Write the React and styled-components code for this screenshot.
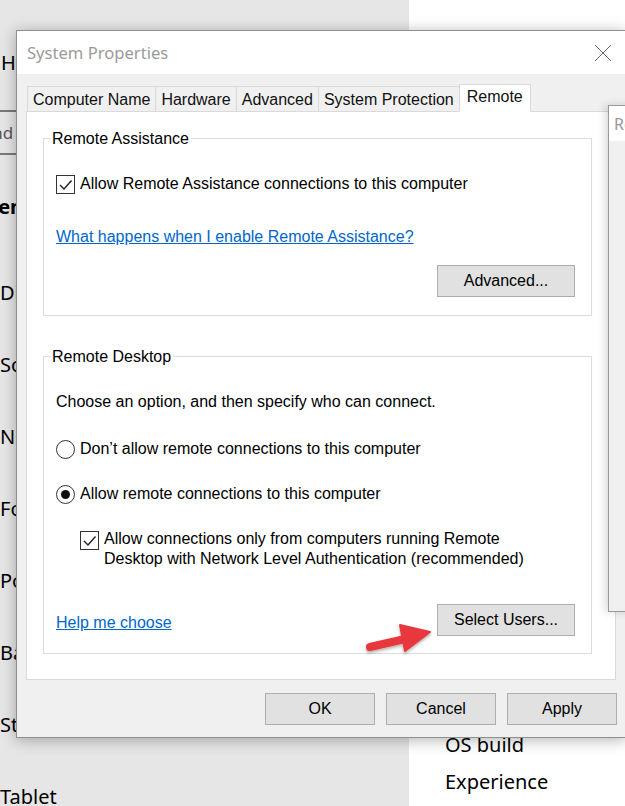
import styled, { createGlobalStyle } from "styled-components";

const GlobalStyle = createGlobalStyle`
  html, body {
    margin: 0;
    padding: 0;
  }
  body {
    width: 625px;
    height: 806px;
    overflow: hidden;
    background: #fff;
  }
`;

const navItems = [
  "Display",
  "Sound",
  "Notifications & actions",
  "Focus assist",
  "Power & sleep",
  "Battery",
  "Storage",
  "Tablet",
];

export default function App() {
  return (
    <>
      <GlobalStyle />
      <Screen>
        <Nav>
          <NavHome>Home</NavHome>
          <SearchBox>Find a setting</SearchBox>
          <NavHeading>System</NavHeading>
          <NavList>
            {navItems.map((item) => (
              <NavItem key={item}>{item}</NavItem>
            ))}
          </NavList>
        </Nav>
        <Content>
          <ContentLine>OS build</ContentLine>
          <ContentLine>Experience</ContentLine>
        </Content>

        <Dialog>
          <TitleBar>
            <Title>System Properties</Title>
            <CloseIcon width="18" height="18" viewBox="0 0 18 18">
              <line x1="1" y1="1" x2="17" y2="17" />
              <line x1="17" y1="1" x2="1" y2="17" />
            </CloseIcon>
          </TitleBar>
          <Body>
            <TabStrip>
              <Tab>Computer Name</Tab>
              <Tab>Hardware</Tab>
              <Tab>Advanced</Tab>
              <Tab>System Protection</Tab>
              <Tab $active>Remote</Tab>
            </TabStrip>
            <Panel>
              <Group $height={178}>
                <Legend>Remote Assistance</Legend>
                <Row>
                  <CheckBox checked />
                  <span>Allow Remote Assistance connections to this computer</span>
                </Row>
                <Link $top={33}>What happens when I enable Remote Assistance?</Link>
                <GroupButton $top={18}>Advanced...</GroupButton>
              </Group>

              <Group $height={298}>
                <Legend>Remote Desktop</Legend>
                <Row>Choose an option, and then specify who can connect.</Row>
                <Row $top={27}>
                  <Radio />
                  <span>Don’t allow remote connections to this computer</span>
                </Row>
                <Row $top={25}>
                  <Radio checked />
                  <span>Allow remote connections to this computer</span>
                </Row>
                <Row $top={25} $indent={24} $multi>
                  <CheckBox checked $offset={2} />
                  <span>
                    Allow connections only from computers running Remote
                    <br />
                    Desktop with Network Level Authentication (recommended)
                  </span>
                </Row>
                <GroupFooter>
                  <Link $bottom={3} $self="flex-end">Help me choose</Link>
                  <GroupButton>Select Users...</GroupButton>
                </GroupFooter>
              </Group>
            </Panel>
            <DialogFooter>
              <FooterButton>OK</FooterButton>
              <FooterButton>Cancel</FooterButton>
              <FooterButton>Apply</FooterButton>
            </DialogFooter>
          </Body>
        </Dialog>

        <SideWindow>
          <SideTitle>Remote Desktop Connection</SideTitle>
        </SideWindow>

        <Arrow width="90" height="50" viewBox="0 0 90 50">
          <defs>
            <filter id="sh" x="-20%" y="-20%" width="140%" height="160%">
              <feDropShadow dx="0" dy="2" stdDeviation="1.5" floodOpacity="0.3" />
            </filter>
          </defs>
          <g filter="url(#sh)" fill="#e8383d" stroke="#e8383d" strokeLinejoin="round">
            <line x1="15" y1="35" x2="50" y2="27" strokeWidth="8" strokeLinecap="round" />
            <polygon points="45,13 75,20 50,39" strokeWidth="2" />
          </g>
        </Arrow>
      </Screen>
    </>
  );
}

function CheckBox({ checked, $offset }) {
  return (
    <Box $offset={$offset}>
      {checked && (
        <svg width="17" height="17" viewBox="0 0 17 17">
          <polyline
            points="3,9 7,13 14.5,4.5"
            fill="none"
            stroke="#222"
            strokeWidth="1.4"
          />
        </svg>
      )}
    </Box>
  );
}

function Radio({ checked }) {
  return <Circle>{checked && <Dot />}</Circle>;
}

const Screen = styled.div`
  position: relative;
  width: 625px;
  height: 806px;
  overflow: hidden;
  display: grid;
  grid-template-columns: 409px 1fr;
`;

const Nav = styled.div`
  background: #e6e6e6;
  display: flex;
  flex-direction: column;
  padding-top: 44px;
  font-family: "Noto Sans", "Open Sans", sans-serif;
  font-size: 20px;
  color: #000;
  white-space: nowrap;
`;

const NavHome = styled.div`
  height: 36px;
  display: flex;
  align-items: center;
  padding-left: 1px;
`;

const SearchBox = styled.div`
  box-sizing: border-box;
  margin-top: 30px;
  margin-left: -40px;
  width: 420px;
  height: 45px;
  border: 2px solid #7a7a7a;
  display: flex;
  align-items: center;
  padding-left: 17px;
  font-size: 17px;
  color: #555;
`;

const NavHeading = styled.div`
  margin-top: 33px;
  margin-left: -43px;
  height: 36px;
  display: flex;
  align-items: center;
  font-weight: 700;
`;

const NavList = styled.div`
  margin-top: 32px;
  display: flex;
  flex-direction: column;
`;

const NavItem = styled.div`
  height: 72px;
  display: flex;
  align-items: center;
`;

const Content = styled.div`
  background: #fff;
  padding: 727px 0 0 36px;
  font-family: "Noto Sans", "Open Sans", sans-serif;
  font-size: 20px;
  color: #000;
`;

const ContentLine = styled.div`
  height: 37px;
  line-height: 36px;
`;

const Dialog = styled.div`
  position: absolute;
  left: 16px;
  top: 30px;
  width: 610px;
  box-sizing: border-box;
  border: 1px solid #8f8f8f;
  background: #f0f0f0;
  box-shadow: 0 2px 14px rgba(0, 0, 0, 0.3);
  display: flex;
  flex-direction: column;
  font-family: "Liberation Sans", Arial, sans-serif;
  font-size: 16px;
  color: #000;
`;

const TitleBar = styled.div`
  height: 43px;
  background: #fff;
  display: flex;
  align-items: center;
  justify-content: space-between;
  padding: 0 13px 0 10px;
`;

const Title = styled.div`
  font-family: "Noto Sans", "Open Sans", sans-serif;
  font-size: 16.6px;
  color: #9a9a9a;
`;

const CloseIcon = styled.svg`
  stroke: #666;
  stroke-width: 1;
  margin-top: 1px;
`;

const Body = styled.div`
  display: flex;
  flex-direction: column;
  padding: 10px 9px 12px 9px;
`;

const TabStrip = styled.div`
  display: flex;
  align-items: flex-end;
  height: 27px;
  padding-left: 1px;
  position: relative;
  z-index: 1;
`;

const Tab = styled.div`
  box-sizing: border-box;
  height: ${(p) => (p.$active ? "28px" : "25px")};
  margin-bottom: ${(p) => (p.$active ? "-1px" : "0")};
  margin-left: -1px;
  padding: ${(p) => (p.$active ? "0 7px 2px" : "1px 5px 0")};
  display: flex;
  align-items: center;
  border: 1px solid #d9d9d9;
  border-bottom: ${(p) => (p.$active ? "1px solid #fff" : "none")};
  background: ${(p) => (p.$active ? "#fff" : "#f0f0f0")};
  color: #111;
  white-space: nowrap;
  &:first-child {
    margin-left: 0;
  }
`;

const Panel = styled.div`
  box-sizing: border-box;
  height: 569px;
  background: #fff;
  border: 1px solid #d9d9d9;
  padding: 26px 23px 0 16px;
  display: flex;
  flex-direction: column;
  gap: 40px;
`;

const Group = styled.div`
  position: relative;
  box-sizing: border-box;
  height: ${(p) => p.$height}px;
  border: 1px solid #dcdcdc;
  padding: 35px 16px 0 12px;
  display: flex;
  flex-direction: column;
`;

const Legend = styled.div`
  position: absolute;
  top: -10px;
  left: 7px;
  padding: 0 2px 0 1px;
  background: #fff;
  line-height: 20px;
`;

const Row = styled.div`
  display: flex;
  align-items: ${(p) => (p.$multi ? "flex-start" : "center")};
  gap: 5px;
  line-height: 20px;
  margin-top: ${(p) => p.$top || 0}px;
  padding-left: ${(p) => p.$indent || 0}px;
`;

const Box = styled.div`
  box-sizing: border-box;
  flex: none;
  width: 19px;
  height: 19px;
  margin-top: ${(p) => p.$offset || 0}px;
  border: 1px solid #333;
  background: #fff;
  display: flex;
  align-items: center;
  justify-content: center;
`;

const Circle = styled.div`
  box-sizing: border-box;
  flex: none;
  width: 19px;
  height: 19px;
  border-radius: 50%;
  border: 1px solid #333;
  background: #fff;
  display: flex;
  align-items: center;
  justify-content: center;
`;

const Dot = styled.div`
  width: 9px;
  height: 9px;
  border-radius: 50%;
  background: #111;
`;

const Link = styled.a`
  align-self: ${(p) => p.$self || "flex-start"};
  color: #0066cc;
  text-decoration: underline;
  line-height: 20px;
  margin-top: ${(p) => p.$top || 0}px;
  margin-bottom: ${(p) => p.$bottom || 0}px;
  cursor: pointer;
`;

const GroupButton = styled.button`
  align-self: flex-end;
  width: 138px;
  height: 32px;
  margin-top: ${(p) => p.$top || 0}px;
  background: #e1e1e1;
  border: 1px solid #adadad;
  font-family: inherit;
  font-size: 16px;
  color: #000;
  padding: 0;
`;

const GroupFooter = styled.div`
  margin-top: 35px;
  display: flex;
  justify-content: space-between;
  align-items: flex-end;
`;

const DialogFooter = styled.div`
  margin-top: 13px;
  margin-right: -1px;
  display: flex;
  justify-content: flex-end;
  gap: 11px;
`;

const FooterButton = styled.button`
  width: 110px;
  height: 32px;
  background: #e1e1e1;
  border: 1px solid #adadad;
  font-family: inherit;
  font-size: 16px;
  color: #000;
  padding: 0;
`;

const SideWindow = styled.div`
  position: absolute;
  left: 608px;
  top: 105px;
  width: 60px;
  height: 507px;
  box-sizing: border-box;
  border: 1px solid #9a9a9a;
  background: #f0f0f0;
  box-shadow: -3px 0 8px rgba(0, 0, 0, 0.15);
`;

const SideTitle = styled.div`
  height: 35px;
  background: #fff;
  padding-left: 5px;
  display: flex;
  align-items: center;
  font-family: "Noto Sans", "Open Sans", sans-serif;
  font-size: 16px;
  color: #999;
  white-space: nowrap;
  overflow: hidden;
`;

const Arrow = styled.svg`
  position: absolute;
  left: 355px;
  top: 612px;
`;
